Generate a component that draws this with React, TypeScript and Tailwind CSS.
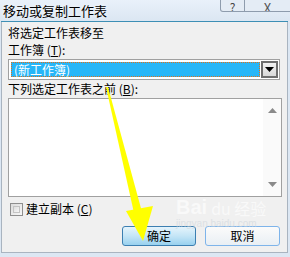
import React from 'react'

const cjk = '"Noto Sans CJK SC", "DejaVu Sans", sans-serif'

// Small gray triangle used for list and combo arrows
function Tri({ up, className }: { up?: boolean; className?: string }) {
  return (
    <svg width="9" height="5" viewBox="0 0 9 5" className={className}>
      {up ? <polygon points="0,5 9,5 4.5,0" /> : <polygon points="0,0 9,0 4.5,5" />}
    </svg>
  )
}

export default function App() {
  return (
    <div
      className="relative w-[290px] h-[257px] overflow-hidden bg-[#dce7f3] text-[12px] leading-[14px] text-black"
      style={{ fontFamily: cjk }}
    >
      {/* title bar */}
      <div className="flex h-[21px] items-start justify-between bg-gradient-to-b from-[#e9f1fa] to-[#dbe6f2]">
        <div className="pl-[3px] pt-[3px] text-[13px] leading-[15px] [text-shadow:0_0_4px_#fff]">
          移动或复制工作表
        </div>
        <div className="flex h-[12px]">
          <div className="flex h-[12px] w-[25px] items-end justify-center overflow-hidden rounded-bl-[3px] border border-t-0 border-[#8e9cad] bg-[#e4ecf5] text-[12px] leading-[12px] text-[#444]">
            <span className="-mb-[2px]">?</span>
          </div>
          <div className="flex h-[12px] w-[45px] items-end justify-center overflow-hidden border-b border-[#8e9cad] bg-[#e4ecf5] text-[13px] leading-[12px] text-[#555]">
            <span className="-mb-[3px]">X</span>
          </div>
        </div>
      </div>

      {/* dialog body */}
      <div className="ml-[1px] mr-[2px] h-[232px] border-t border-t-[#3d8fb5] bg-[#f0f0f0]">
        <div className="h-full border border-t-0 border-[#a9b4c0] px-[6px]">
          <div className="pt-[4px]">将选定工作表移至</div>
          <div className="mt-[3px]">
            工作簿 (<span className="underline">T</span>):
          </div>

          {/* combobox */}
          <div className="mt-[2px] flex h-[21px] w-[272px] border border-[#a0a0a0] bg-white p-[1px]">
            <div className="flex flex-1 items-center p-[1px]">
              <div className="flex h-[15px] w-full items-center border border-dotted border-[#e0701a] bg-[#27b6f7] pl-[2px] text-white">
                (新工作簿)
              </div>
            </div>
            <div className="flex w-[17px] items-center justify-center border-2 border-[#6e6e6e] bg-gradient-to-b from-[#f2f2f2] to-[#d8d8d8]">
              <Tri className="fill-black" />
            </div>
          </div>

          <div className="mt-[2px]">
            下列选定工作表之前 (<span className="underline">B</span>):
          </div>

          {/* list box */}
          <div className="mt-[2px] flex h-[99px] w-[274px] border border-[#a0a0a0] bg-white">
            <div className="flex-1" />
            <div className="flex w-[18px] flex-col items-center justify-between bg-[#fafafa] py-[9px]">
              <Tri up className="fill-[#8a8a8a]" />
              <Tri className="fill-[#8a8a8a]" />
            </div>
          </div>

          {/* copy checkbox */}
          <div className="mt-[5px] flex items-center gap-[3px] pl-[2px]">
            <div className="h-[13px] w-[13px] border border-[#8f8f8f] bg-gradient-to-br from-[#dcdcdc] to-[#f8f8f8] p-[2px]">
              <div className="h-full w-full border border-[#c4c4c4] bg-gradient-to-br from-[#e0e0e0] to-[#f6f6f6]" />
            </div>
            <div>
              建立副本 (<span className="underline">C</span>)
            </div>
          </div>

          {/* buttons */}
          <div className="mt-[10px] flex justify-end gap-[9px] pr-[1px]">
            <button className="h-[20px] w-[74px] rounded-[3px] border border-[#3c7fb1] bg-gradient-to-b from-[#e5f4fc] via-[#c4e5f6] to-[#98d1ef] text-[12px] leading-[18px]">
              确定
            </button>
            <button className="h-[20px] w-[75px] rounded-[3px] border border-[#7eb4ea] bg-gradient-to-b from-[#fbfbfb] to-[#e9eff4] text-[12px] leading-[18px]">
              取消
            </button>
          </div>
        </div>
      </div>

      {/* faint watermark */}
      <div className="pointer-events-none absolute left-[176px] top-[196px] text-white opacity-60">
        <div className="flex items-end gap-[4px]">
          <span className="text-[20px] font-bold leading-[22px] [font-family:'Liberation_Sans',sans-serif]">Bai</span>
          <span className="text-[16px] leading-[20px]">du 经验</span>
        </div>
        <div className="text-[10px] leading-[12px] text-[#cfd6dc] [font-family:'Liberation_Sans',sans-serif]">
          jingyan.baidu.com
        </div>
      </div>

      {/* yellow arrow annotation */}
      <svg className="pointer-events-none absolute left-0 top-0" width="290" height="257" viewBox="0 0 290 257">
        <polygon points="106,87 108,87 142,212 134,213" fill="#ffff00" />
        <polygon points="126,211 153,206 143,241" fill="#ffff00" />
      </svg>
    </div>
  )
}
